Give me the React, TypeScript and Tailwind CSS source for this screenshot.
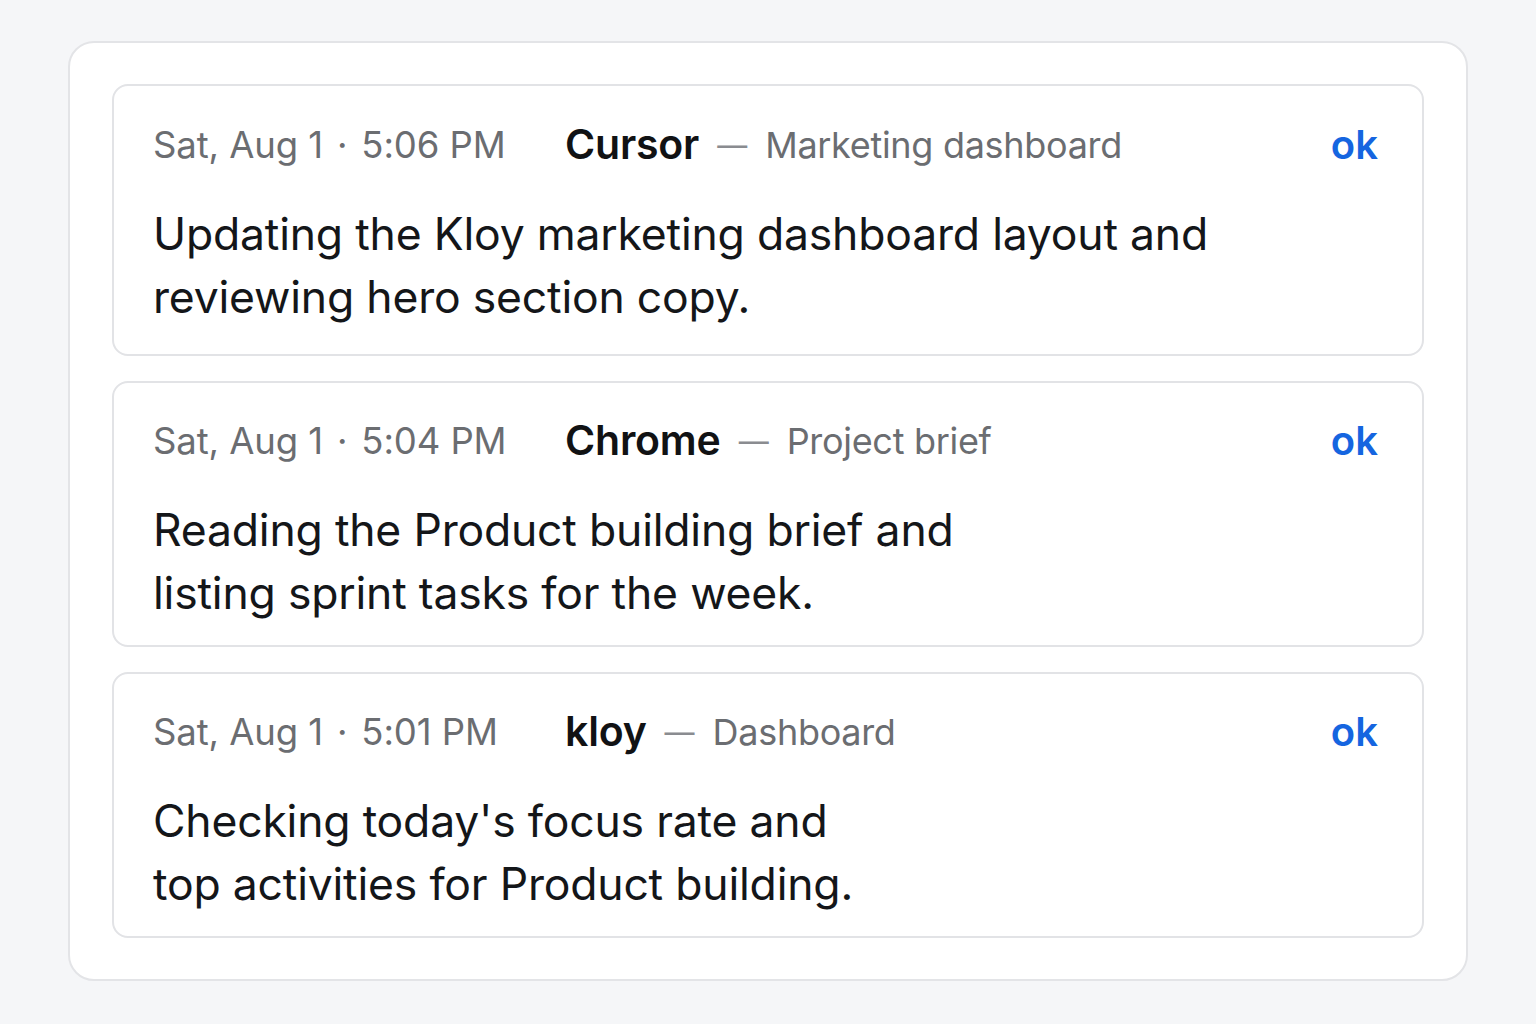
import React from "react";

type Entry = {
  day: string;
  clock: string;
  app: string;
  title: string;
  lines: string[];
};

const entries: Entry[] = [
  {
    day: "Sat, Aug 1",
    clock: "5:06 PM",
    app: "Cursor",
    title: "Marketing dashboard",
    lines: [
      "Updating the Kloy marketing dashboard layout and",
      "reviewing hero section copy.",
    ],
  },
  {
    day: "Sat, Aug 1",
    clock: "5:04 PM",
    app: "Chrome",
    title: "Project brief",
    lines: [
      "Reading the Product building brief and",
      "listing sprint tasks for the week.",
    ],
  },
  {
    day: "Sat, Aug 1",
    clock: "5:01 PM",
    app: "kloy",
    title: "Dashboard",
    lines: [
      "Checking today's focus rate and",
      "top activities for Product building.",
    ],
  },
];

function EntryCard({ entry, first }: { entry: Entry; first: boolean }) {
  return (
    <div
      className={`rounded-[16px] border-2 border-[#e2e3e6] bg-white pl-[39px] pr-[44px] ${
        first ? "pt-[37px] pb-[25px]" : "pt-[36px] pb-[20px]"
      }`}
    >
      <div className="flex items-center h-[44px]">
        <span className="w-[412px] shrink-0 flex items-center text-[36.5px] text-[#6b6d71] tracking-[-0.1px]">
          <span>{entry.day}</span>
          <span className="mx-[14px]">·</span>
          <span>{entry.clock}</span>
        </span>
        <span className="text-[41px] font-semibold text-[#111214] tracking-[-0.2px]">
          {entry.app}
        </span>
        <span className="mx-[18px] text-[30px] text-[#8a8c90]">—</span>
        <span className="text-[36px] text-[#6b6d71] tracking-[-0.3px]">{entry.title}</span>
        <span className="ml-auto text-[40px] font-semibold text-[#1565e0]">ok</span>
      </div>
      <div className="mt-[36px] text-[44.5px] leading-[63px] text-[#141619] tracking-[-0.2px]">
        {entry.lines.map((l) => (
          <div key={l}>{l}</div>
        ))}
      </div>
    </div>
  );
}

export default function App() {
  return (
    <div
      className="min-h-screen w-full bg-[#f5f6f8] px-[68px] pt-[41px] pb-[44px]"
      style={{ fontFamily: "Inter, 'Noto Sans', sans-serif" }}
    >
      <div className="rounded-[26px] border-2 border-[#e3e4e7] bg-white px-[42px] py-[41px] flex flex-col gap-[25px]">
        {entries.map((e, i) => (
          <EntryCard key={e.app} entry={e} first={i === 0} />
        ))}
      </div>
    </div>
  );
}
